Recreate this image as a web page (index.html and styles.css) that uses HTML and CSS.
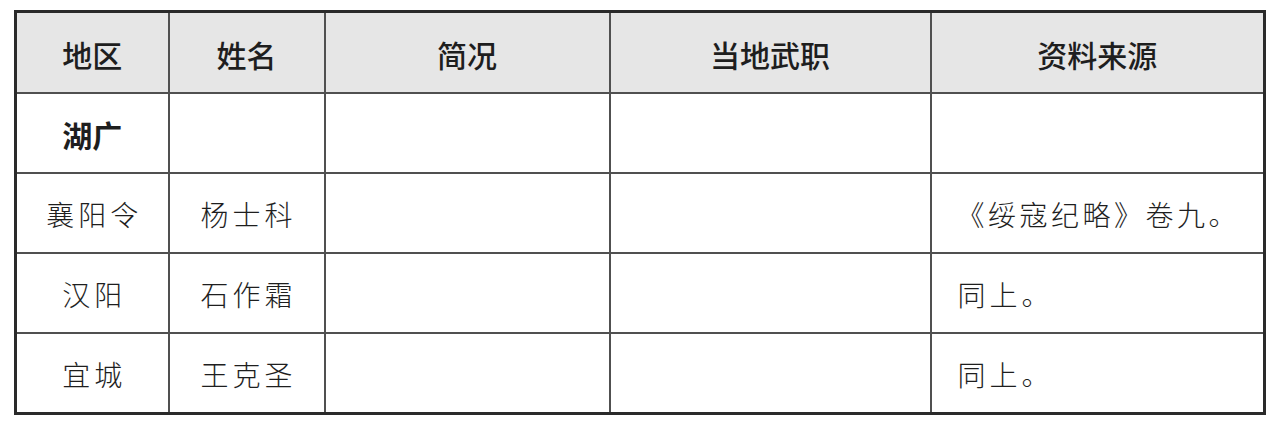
FILE: index.html
```html
<!DOCTYPE html>
<html lang="zh-CN">
<head>
<meta charset="utf-8">
<title>地区表</title>
<link rel="stylesheet" href="styles.css">
</head>
<body>
<div class="page">
  <table class="roster">
    <colgroup>
      <col class="c-region">
      <col class="c-name">
      <col class="c-brief">
      <col class="c-post">
      <col class="c-src">
    </colgroup>
    <thead>
      <tr>
        <th>地区</th>
        <th>姓名</th>
        <th>简况</th>
        <th>当地武职</th>
        <th>资料来源</th>
      </tr>
    </thead>
    <tbody>
      <tr>
        <td class="group">湖广</td>
        <td></td>
        <td></td>
        <td></td>
        <td></td>
      </tr>
      <tr>
        <td class="center">襄阳令</td>
        <td class="center">杨士科</td>
        <td></td>
        <td></td>
        <td class="src src-book">《绥寇纪略》卷九。</td>
      </tr>
      <tr>
        <td class="center">汉阳</td>
        <td class="center">石作霜</td>
        <td></td>
        <td></td>
        <td class="src">同上。</td>
      </tr>
      <tr>
        <td class="center">宜城</td>
        <td class="center">王克圣</td>
        <td></td>
        <td></td>
        <td class="src">同上。</td>
      </tr>
    </tbody>
  </table>
</div>
</body>
</html>
```

FILE: styles.css
```css
html, body {
  margin: 0;
  padding: 0;
  background: #ffffff;
}

.page {
  padding: 10px 0 0 14px;
}

.roster {
  border-collapse: collapse;
  table-layout: fixed;
  width: 1249px;
  border: 3px solid #2a2a2a;
  color: #1e1e1e;
  font-family: "Noto Sans CJK SC", "Noto Sans", sans-serif;
}

.c-region { width: 153px; }
.c-name { width: 156px; }
.c-brief { width: 285px; }
.c-post { width: 321px; }
.c-src { width: 334px; }

.roster th,
.roster td {
  border: 2px solid #505050;
  height: 80px;
  padding: 3px 0 0 0;
  box-sizing: border-box;
}

.roster tr > *:first-child { border-left: 3px solid #2a2a2a; }
.roster tr > *:last-child { border-right: 3px solid #2a2a2a; }
.roster thead th { border-top: 3px solid #2a2a2a; height: 81px; }
.roster tbody tr:last-child td { border-bottom: 3px solid #2a2a2a; height: 81px; }

.roster th {
  background: #e6e6e6;
  font-size: 30px;
  font-weight: 500;
  text-align: center;
  line-height: 1;
}

.roster td {
  font-size: 28px;
  font-weight: 300;
  line-height: 1;
}

.roster td.group {
  font-size: 30px;
  font-weight: 700;
  text-align: center;
}

.roster td.center {
  text-align: center;
  letter-spacing: 4px;
  text-indent: 4px;
}

.roster td.src {
  text-align: left;
  padding-left: 26px;
  letter-spacing: 4px;
}

.roster td.src-book {
  padding-left: 25px;
  letter-spacing: 3.5px;
}
```
